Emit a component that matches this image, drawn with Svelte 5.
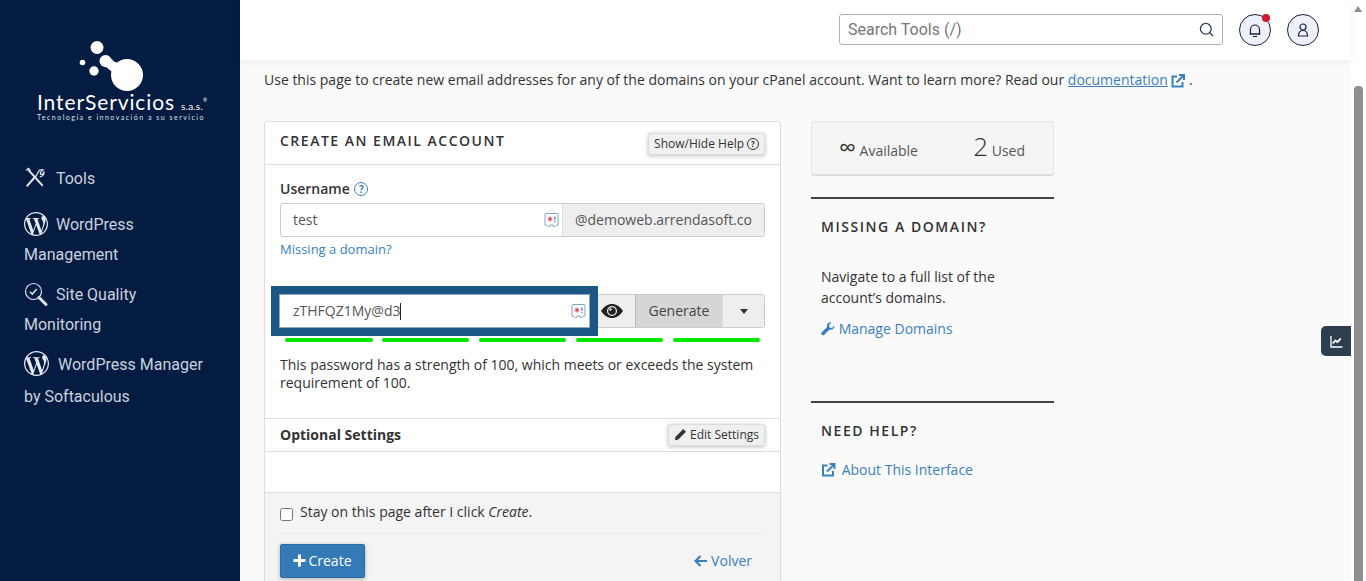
<script>
	const bars = [0, 1, 2, 3, 4]
</script>

{#snippet wp(size)}
	<svg class="nav-icon" width={size} height={size} viewBox="0 0 24 24">
		<path d="M21.469 6.825c.84 1.537 1.318 3.3 1.318 5.175 0 3.979-2.156 7.456-5.363 9.325l3.295-9.527c.615-1.54.82-2.771.82-3.864 0-.405-.026-.78-.07-1.11m-7.981.105c.647-.03 1.232-.105 1.232-.105.582-.075.514-.93-.067-.899 0 0-1.755.135-2.88.135-1.064 0-2.85-.15-2.85-.15-.585-.03-.661.855-.075.885 0 0 .54.061 1.125.09l1.68 4.605-2.37 7.08L5.354 6.9c.649-.03 1.234-.1 1.234-.1.585-.075.516-.93-.065-.896 0 0-1.746.138-2.874.138-.2 0-.438-.008-.69-.015C4.911 3.15 8.235 1.215 12 1.215c2.809 0 5.365 1.072 7.286 2.833-.046-.003-.091-.009-.141-.009-1.06 0-1.812.923-1.812 1.914 0 .89.513 1.643 1.06 2.531.411.72.89 1.643.89 2.977 0 .915-.354 1.994-.821 3.479l-1.075 3.585-3.9-11.61.001.014zM12 22.784c-1.059 0-2.081-.153-3.048-.437l3.237-9.406 3.315 9.087c.024.053.05.101.078.149-1.12.393-2.325.609-3.582.609M1.211 12c0-1.564.336-3.05.935-4.39L7.29 21.709C3.694 19.96 1.212 16.271 1.212 12M12 0C5.385 0 0 5.385 0 12s5.385 12 12 12 12-5.385 12-12S18.615 0 12 0" fill="#e6e9ef" />
	</svg>
{/snippet}

{#snippet sparkle()}
	<svg class="keeper" width="15" height="16" viewBox="0 0 15 16">
		<path d="M2 1.500h11a1 1 0 0 1 1 1v10.500l-2 .5-1 1h-1.500l-.5-1.500h-3l-.5 1.500H4l-1-1-2-.5V2.500a1 1 0 0 1 1-1z" fill="#fff" stroke="#7fa6c9" stroke-width="1" />
		<path d="M6 4.500v5M3.800 5.700l4.400 2.600M8.200 5.700 3.800 8.300" stroke="#d9363e" stroke-width="1" fill="none" />
		<rect x="10.300" y="4.500" width="1.200" height="3.500" fill="#4a7aa8" />
		<rect x="10.300" y="9" width="1.200" height="1.200" fill="#4a7aa8" />
	</svg>
{/snippet}

<div class="page">
	<aside class="sidebar">
		<div class="logo">
			<svg class="logo-mark" width="90" height="58" viewBox="0 0 90 58">
				<g fill="#fff">
					<circle cx="22" cy="7.500" r="6.500" />
					<circle cx="7.500" cy="22.500" r="2.800" />
					<circle cx="19" cy="31" r="4.700" />
					<circle cx="52" cy="35" r="16" />
					<circle cx="30.500" cy="21" r="6" />
					<path d="M32 15.500c4 1 5 6 10 7l2 14-10-7c-2-2-3-3-5-3z" />
				</g>
			</svg>
			<div class="logo-name">InterServicios<span class="sas">s.a.s.</span><sup>®</sup></div>
			<div class="logo-tag">Tecnología e innovación a su servicio</div>
		</div>
		<nav>
			<a class="nav-item" href="#tools">
				<svg class="nav-icon tools-icon" width="21" height="21" viewBox="0 0 22 22" fill="none" stroke="#dfe3ea" stroke-linecap="round">
					<path d="M5 3.500 19 19" stroke-width="2.200" />
					<path d="M2.500 3 5 1.500l1.500 2.500" stroke-width="1.300" />
					<path d="M12 10 3.500 19.500" stroke-width="2.200" />
					<path d="M13 9l2-4c1-1.500 3-2.500 5-2l-3 3 .5 1.500 1.500.5 2-2.500c.3 2-1.500 4.500-4 4.500" stroke-width="1.300" />
				</svg>
				<span class="tools-label">Tools</span>
			</a>
			<a class="nav-item" href="#wp">
				{@render wp(24)}<span class="first">WordPress</span><br />Management
			</a>
			<a class="nav-item" href="#quality">
				<svg class="nav-icon" width="24" height="24" viewBox="0 0 24 24" fill="none" stroke="#dfe3ea">
					<circle cx="9.500" cy="9.500" r="8" stroke-width="1.200" />
					<path d="M5.800 9.800l2.500 2.300 4.400-5" stroke-width="1.500" />
					<path d="M15 15.500l7 7" stroke-width="3" stroke-linecap="round" />
				</svg><span class="first">Site Quality</span><br />Monitoring
			</a>
			<a class="nav-item last" href="#softaculous">
				{@render wp(25)}<span class="first wide">WordPress Manager</span><br /><span class="by">by Softaculous</span>
			</a>
		</nav>
	</aside>

	<div class="main">
		<header class="topbar">
			<div class="search">
				<span>Search Tools (/)</span>
				<svg width="15" height="15" viewBox="0 0 15 15" fill="none" stroke="#2c3e50" stroke-width="1.300">
					<circle cx="6.800" cy="6.800" r="5.400" />
					<path d="M10.800 10.800l3.200 3.200" />
				</svg>
			</div>
			<button class="round" aria-label="Notifications">
				<svg width="16" height="16" viewBox="0 0 16 16" fill="none" stroke="#14233f" stroke-width="1.200">
					<path d="M3.500 12V7.500a4.500 4.500 0 0 1 9 0V12z" />
					<path d="M2.500 12h11M6 14.500h4" />
				</svg>
				<i class="dot"></i>
			</button>
			<button class="round" aria-label="Account">
				<svg width="16" height="16" viewBox="0 0 16 16" fill="none" stroke="#14233f" stroke-width="1.200">
					<circle cx="8" cy="5" r="3" />
					<path d="M3.500 14c0-3.500 2-5.500 4.500-5.500s4.500 2 4.500 5.500z" />
				</svg>
			</button>
		</header>

		<main class="content">
			<p class="intro">
				Use this page to create new email addresses for any of the domains on your cPanel account. Want to learn more? Read our <a href="#docs">documentation</a>
				<svg class="ext" width="14" height="14" viewBox="0 0 14 14" fill="none" stroke="#3a80bd" stroke-width="2">
					<path d="M6 2.500H1.500v10h10V8" />
					<path d="M5.500 8.500 12.500 1.500M8 1h5v5" />
				</svg>
				.
			</p>

			<div class="columns">
				<section class="card">
					<div class="card-head">
						<h2>CREATE AN EMAIL ACCOUNT</h2>
						<button class="mini">Show/Hide Help <span class="qmark">?</span></button>
					</div>

					<div class="card-body">
						<label class="field-label" for="user">Username <span class="qmark blue">?</span></label>
						<div class="group">
							<div class="input-wrap">
								<input id="user" value="test" readonly />
								{@render sparkle()}
							</div>
							<span class="addon">@demoweb.arrendasoft.co</span>
						</div>
						<a class="small-link" href="#missing">Missing a domain?</a>

						<div class="group pass">
							<div class="input-wrap outlined">
								<div class="fake-input">zTHFQZ1My@d3<i class="caret"></i></div>
								{@render sparkle()}
							</div>
							<button class="eye" aria-label="Show password">
								<svg width="24" height="16" viewBox="0 0 24 16">
									<path d="M1 8c3-4.500 7-7 11-7s8 2.500 11 7c-3 4.500-7 7-11 7S4 12.500 1 8z" fill="#222" />
									<circle cx="12" cy="8" r="5" fill="#eee" />
									<circle cx="12" cy="8" r="3.800" fill="#222" />
									<circle cx="10.500" cy="6.500" r="1.200" fill="#eee" />
								</svg>
							</button>
							<button class="generate">Generate</button>
							<button class="caret-btn" aria-label="More"><i></i></button>
						</div>
						<div class="strength">
							{#each bars as b (b)}
								<span></span>
							{/each}
						</div>
						<p class="strength-note">This password has a strength of 100, which meets or exceeds the system requirement of 100.</p>
					</div>

					<div class="optional">
						<strong>Optional Settings</strong>
						<button class="mini">
							<svg width="13" height="13" viewBox="0 0 13 13"><path d="M9.300 1 12 3.700 4.300 11.400.8 12.200 1.600 8.700z" fill="#333" /></svg>
							Edit Settings
						</button>
					</div>
					<div class="blank"></div>

					<div class="card-foot">
						<label class="stay"><input type="checkbox" /> <span>Stay on this page after I click <em>Create</em>.</span></label>
						<div class="actions">
							<button class="create">
								<svg width="13" height="13" viewBox="0 0 13 13"><path d="M5 .5h3V5h4.500v3H8v4.500H5V8H.5V5H5z" fill="#fff" /></svg>
								Create
							</button>
							<a class="back" href="#back">
								<svg width="13" height="12" viewBox="0 0 13 12" fill="none" stroke="#3a80bd" stroke-width="2.200"><path d="M6.500 1 1.500 6l5 5M2 6h11" /></svg>
								Volver
							</a>
						</div>
					</div>
				</section>

				<aside class="side">
					<div class="stats">
						<div><span class="inf">∞</span> Available</div>
						<div><span class="num">2</span> Used</div>
					</div>

					<div class="block">
						<h3>MISSING A DOMAIN?</h3>
						<p>Navigate to a full list of the account’s domains.</p>
						<a href="#domains">
							<svg width="14" height="14" viewBox="0 0 14 14"><path d="M13.500 3.500 11 6 8.500 5.500 8 3l2.500-2.500C8.500 0 6.500 1 6 2.800c-.2.900-.1 1.700.1 2.200L.8 10.300c-.7.700-.7 1.700 0 2.500.7.700 1.800.7 2.500 0l5.300-5.300c.6.300 1.400.300 2.200.1 1.900-.5 3-2.500 2.700-4.600z" fill="#3a80bd" /></svg>
							Manage Domains
						</a>
					</div>

					<div class="block help">
						<h3>NEED HELP?</h3>
						<a href="#about">
							<svg width="15" height="14" viewBox="0 0 14 14" fill="none" stroke="#3a80bd" stroke-width="2"><path d="M6 2.500H1.500v10h10V8" /><path d="M5.500 8.500 12.500 1.500M8 1h5v5" /></svg>
							About This Interface
						</a>
					</div>
				</aside>
			</div>

			<button class="float-tab" aria-label="Statistics">
				<svg width="13" height="13" viewBox="0 0 13 13" fill="none" stroke="#fff">
					<path d="M1 1v11h11.500" stroke-width="1.300" />
					<path d="M2.800 8.500l2.500-3 2 1.500 3.500-3.500" stroke-width="1.800" />
				</svg>
			</button>
		</main>
	</div>

	<div class="scrollbar">
		<i class="up"></i>
		<i class="thumb"></i>
	</div>
</div>

<style>
	:global(body) {
		margin: 0;
		overflow: hidden;
	}
	.page {
		display: flex;
		height: 581px;
		overflow: hidden;
		font-family: "Open Sans", sans-serif;
		font-size: 14px;
		color: #333;
		background: #fafafa;
	}
	a {
		color: #3a80bd;
		text-decoration: none;
	}
	button {
		font-family: inherit;
		padding: 0;
	}

	.sidebar {
		width: 240px;
		flex: none;
		background: #051c42;
		color: #c9d1de;
		font-family: Roboto, sans-serif;
		font-size: 16px;
	}
	.logo {
		padding: 40px 0 0 37px;
		height: 122px;
		color: #fff;
	}
	.logo-mark {
		display: block;
		margin-left: 38px;
	}
	.logo-name {
		font-family: Lato, sans-serif;
		font-weight: 400;
		font-size: 21px;
		line-height: 20px;
		letter-spacing: 0.9px;
		margin-top: -6px;
		white-space: nowrap;
	}
	.sas {
		font-size: 10px;
		margin-left: 6px;
		letter-spacing: 0.2px;
	}
	.logo-name sup {
		font-size: 5px;
		line-height: 0;
		letter-spacing: 0;
	}
	.logo-tag {
		font-family: Lato, sans-serif;
		font-size: 7px;
		line-height: 8px;
		letter-spacing: 1.5px;
		margin-top: -3px;
		color: #dfe3ea;
		white-space: nowrap;
	}
	nav {
		padding-left: 24px;
		margin-top: 2px;
	}
	.nav-item {
		display: block;
		color: #c9d1de;
		line-height: 30px;
		margin-bottom: 10px;
		height: 60px;
	}
	.nav-item:first-child {
		height: 30px;
		margin-bottom: 16px;
		margin-top: 0;
	}
	.nav-item.last {
		height: 64px;
	}
	.nav-icon {
		vertical-align: middle;
		margin-top: -4px;
	}
	.tools-label {
		margin-left: 7px;
	}
	.first {
		margin-left: 8px;
	}
	.first.wide {
		margin-left: 9px;
	}
	.by {
		line-height: 34px;
	}

	.main {
		flex: 1;
		min-width: 0;
		display: flex;
		flex-direction: column;
		position: relative;
	}
	.topbar {
		height: 60px;
		flex: none;
		background: #fff;
		box-shadow: 0 2px 5px rgba(0, 0, 0, 0.06);
		display: flex;
		align-items: center;
		justify-content: flex-end;
		gap: 16px;
		padding-right: 32px;
		position: relative;
		z-index: 1;
	}
	.search {
		width: 384px;
		height: 31px;
		margin-top: -1px;
		box-sizing: border-box;
		border: 1px solid #aab0ba;
		border-radius: 3px;
		display: flex;
		align-items: center;
		justify-content: space-between;
		padding: 0 8px;
		font-family: Roboto, sans-serif;
		font-size: 16px;
		color: #777;
	}
	.search span {
		margin-top: -1px;
	}
	.round {
		width: 32px;
		height: 32px;
		box-sizing: border-box;
		border-radius: 50%;
		border: 1px solid #14233f;
		background: #eef0fb;
		position: relative;
		display: flex;
		align-items: center;
		justify-content: center;
	}
	.dot {
		position: absolute;
		top: -1px;
		right: 0;
		width: 8px;
		height: 8px;
		border-radius: 50%;
		background: #d3152f;
	}

	.content {
		flex: 1;
		padding: 10px 0 0 24px;
		position: relative;
		min-height: 0;
	}
	.intro {
		margin: 0;
		line-height: 19px;
		white-space: nowrap;
	}
	.intro a {
		text-decoration: underline;
	}
	.ext {
		vertical-align: -3px;
	}
	.columns {
		display: flex;
		gap: 30px;
		align-items: flex-start;
		margin-top: 32px;
	}

	.card {
		width: 517px;
		box-sizing: border-box;
		background: #fff;
		border: 1px solid #ddd;
		border-radius: 3px 3px 0 0;
	}
	.card-head {
		height: 42px;
		border-bottom: 1px solid #ddd;
		display: flex;
		justify-content: space-between;
		padding: 0 15px;
	}
	h2 {
		margin: 0;
		font-size: 14px;
		font-weight: 600;
		letter-spacing: 1.5px;
		line-height: 38px;
		color: #333;
	}
	.mini {
		align-self: flex-start;
		margin-top: 11px;
		height: 22px;
		padding: 0 5px 1px;
		background: #f0f0f0;
		border: 1px solid #ddd;
		border-radius: 2px;
		font-size: 12px;
		color: #333;
		box-shadow: 0 1px 4px rgba(0, 0, 0, 0.25);
		display: inline-flex;
		align-items: center;
		gap: 3px;
		white-space: nowrap;
	}
	.qmark {
		display: inline-block;
		width: 10px;
		height: 10px;
		line-height: 10px;
		border: 1px solid #333;
		border-radius: 50%;
		font-size: 8px;
		font-weight: 700;
		text-align: center;
	}
	.qmark.blue {
		width: 12px;
		height: 12px;
		line-height: 12px;
		border-color: #3a80bd;
		color: #3a80bd;
		font-size: 10px;
		margin-left: 1px;
		vertical-align: 1px;
	}
	.card-body {
		padding: 14px 15px 0;
		height: 239px;
	}
	.field-label {
		display: block;
		font-weight: 600;
		line-height: 19px;
		margin-bottom: 5px;
	}
	.group {
		display: flex;
		height: 34px;
		border: 1px solid #ccc;
		border-radius: 3px;
		box-sizing: border-box;
	}
	.input-wrap {
		position: relative;
		flex: 1;
		min-width: 0;
	}
	.input-wrap input,
	.fake-input {
		display: block;
		width: 100%;
		height: 32px;
		box-sizing: border-box;
		border: 0;
		outline: 0;
		padding: 0 12px;
		font: 14px/32px "Open Sans", sans-serif;
		color: #555;
		background: transparent;
	}
	.input-wrap .fake-input {
		padding-left: 13px;
	}
	.keeper {
		position: absolute;
		right: 3px;
		top: 8px;
	}
	.addon {
		background: #eee;
		color: #555;
		border-left: 1px solid #ddd;
		line-height: 32px;
		padding: 0 12px;
		width: 202px;
		box-sizing: border-box;
		white-space: nowrap;
		overflow: hidden;
		border-radius: 0 3px 3px 0;
	}
	.small-link {
		display: block;
		font-size: 13px;
		line-height: 17px;
		margin-top: 4px;
	}
	.pass {
		margin-top: 36px;
		position: relative;
	}
	.outlined {
		flex: none;
		width: 309px;
		background: #fff;
		outline: 1px solid #8fa9c0;
		box-shadow: 0 0 0 9px #1a5785;
		z-index: 1;
		margin-left: -1px;
		margin-right: 1px;
	}
	.caret {
		display: inline-block;
		width: 1px;
		height: 17px;
		background: #222;
		vertical-align: -4px;
	}
	.eye {
		width: 45px;
		border: 0;
		background: #eee;
		display: flex;
		align-items: center;
		justify-content: center;
		padding-right: 2px;
	}
	.generate {
		width: 88px;
		border: 0;
		border-left: 1px solid #bbb;
		border-right: 1px solid #ddd;
		background: #d6d6d6;
		font-size: 14px;
		color: #444;
		padding-bottom: 2px;
	}
	.caret-btn {
		flex: 1;
		border: 0;
		background: #eee;
		border-radius: 0 3px 3px 0;
	}
	.caret-btn i {
		display: inline-block;
		border: 4.500px solid transparent;
		border-top: 5px solid #333;
		border-bottom: 0;
		vertical-align: 2px;
	}
	.strength {
		display: flex;
		justify-content: space-between;
		padding: 0 5px;
		margin-top: 10px;
		position: relative;
		z-index: 2;
	}
	.strength span {
		width: 87.500px;
		height: 4px;
		border-radius: 2px;
		background: #00e800;
	}
	.strength-note {
		margin: 14px 0 0;
		line-height: 18px;
	}
	.optional {
		height: 32px;
		border-top: 1px solid #ddd;
		border-bottom: 1px solid #ddd;
		display: flex;
		justify-content: space-between;
		align-items: center;
		padding: 0 15px;
	}
	.optional strong {
		font-weight: 700;
		margin-top: -2px;
	}
	.optional .mini {
		margin-top: 0;
		align-self: center;
	}
	.blank {
		height: 40px;
	}
	.card-foot {
		background: #f4f4f4;
		border-top: 1px solid #ddd;
		padding: 10px 15px;
	}
	.stay {
		display: flex;
		align-items: center;
		gap: 7px;
		height: 20px;
		line-height: 20px;
	}
	.stay span {
		margin-top: -2px;
	}
	.stay input {
		margin: 2px 0 0;
		width: 13px;
		height: 13px;
	}
	.actions {
		border-top: 1px solid #eaeaea;
		margin-top: 10px;
		padding-top: 10px;
		display: flex;
		align-items: center;
		justify-content: space-between;
	}
	.create {
		width: 85px;
		height: 34px;
		background: #337ab7;
		border: 1px solid #2e6da4;
		border-radius: 2px;
		color: #fff;
		font-size: 14px;
		padding-bottom: 2px;
		box-shadow: 0 1px 4px rgba(0, 0, 0, 0.3);
		display: inline-flex;
		align-items: center;
		justify-content: center;
		gap: 2px;
	}
	.back {
		margin: -2px 13px 0 0;
	}
	.back svg {
		vertical-align: -1px;
	}

	.side {
		width: 243px;
		flex: none;
	}
	.stats {
		height: 55px;
		box-sizing: border-box;
		background: #f5f5f5;
		border: 1px solid #e3e3e3;
		border-bottom: 2px solid #ddd;
		border-radius: 3px;
		display: flex;
		align-items: baseline;
		justify-content: space-between;
		padding: 10px 28px 0 27px;
		color: #555;
	}
	.inf {
		font-size: 24px;
		line-height: 20px;
		color: #333;
	}
	.num {
		font-size: 26px;
		line-height: 28px;
		font-weight: 300;
		color: #333;
	}
	.block {
		margin-top: 21px;
		border-top: 2px solid #444;
		padding: 0 10px;
		height: 204px;
		box-sizing: border-box;
	}
	.block h3 {
		margin: 18px 0 0;
		font-size: 14px;
		font-weight: 600;
		letter-spacing: 1.55px;
		line-height: 19px;
		color: #333;
	}
	.block p {
		margin: 30px 0 0;
		line-height: 21px;
	}
	.block a {
		display: block;
		margin-top: 11px;
		line-height: 19px;
	}
	.block a svg {
		vertical-align: -2px;
	}
	.help {
		margin-top: 0;
		height: auto;
	}
	.help a {
		margin-top: 20px;
	}
	.help a svg {
		margin-right: 2px;
	}
	.float-tab {
		position: absolute;
		right: 0;
		top: 266px;
		width: 30px;
		height: 30px;
		background: #2c3e50;
		border: 0;
		border-radius: 5px 0 0 5px;
		display: flex;
		align-items: center;
		justify-content: center;
	}

	.scrollbar {
		width: 15px;
		flex: none;
		background: #fff;
		position: relative;
	}
	.up {
		position: absolute;
		top: 6px;
		left: 3px;
		border: 4.500px solid transparent;
		border-bottom: 6px solid #8f8f8f;
		border-top: 0;
	}
	.thumb {
		position: absolute;
		left: 3px;
		top: 86px;
		bottom: 0;
		width: 9px;
		border-radius: 4px 4px 0 0;
		background: #8f8f8f;
	}
</style>
